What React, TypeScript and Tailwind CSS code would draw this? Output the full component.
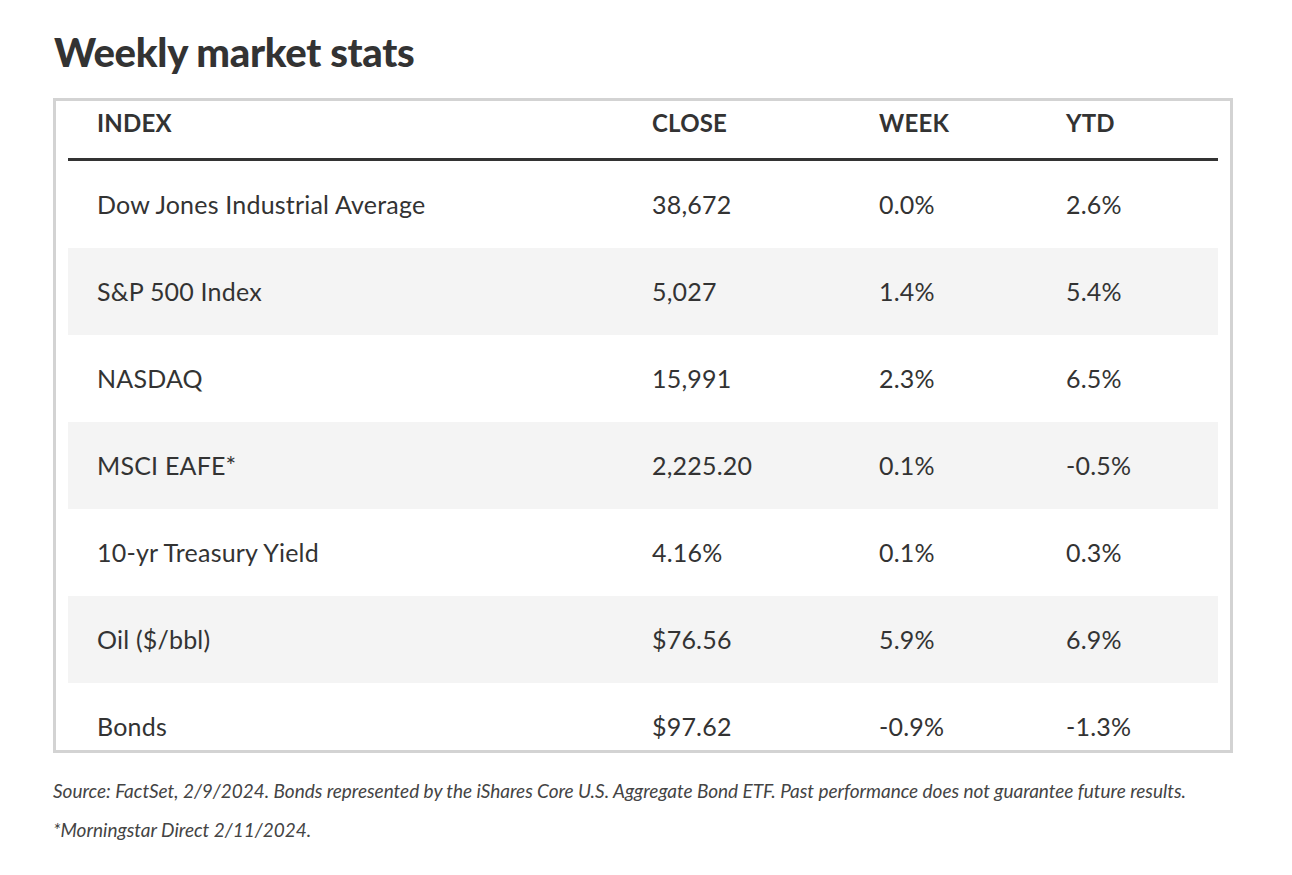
const rows = [
  { name: 'Dow Jones Industrial Average', close: '38,672', week: '0.0%', ytd: '2.6%' },
  { name: 'S&P 500 Index', close: '5,027', week: '1.4%', ytd: '5.4%' },
  { name: 'NASDAQ', close: '15,991', week: '2.3%', ytd: '6.5%' },
  { name: 'MSCI EAFE*', close: '2,225.20', week: '0.1%', ytd: '-0.5%' },
  { name: '10-yr Treasury Yield', close: '4.16%', week: '0.1%', ytd: '0.3%' },
  { name: 'Oil ($/bbl)', close: '$76.56', week: '5.9%', ytd: '6.9%' },
  { name: 'Bonds', close: '$97.62', week: '-0.9%', ytd: '-1.3%' },
];

export default function App() {
  return (
    <div className="min-h-[875px] w-[1292px] bg-white pl-[53px] pt-[28px] text-[#333] font-['Lato',sans-serif]">
      <h1 className="pl-[1px] text-[40px] font-black leading-[48px] tracking-[-0.3px] text-[#333]">Weekly market stats</h1>

      <div className="mt-[22px] w-[1180px] border-[3px] border-[#d3d3d3] px-[12px]">
        <div className="grid h-[60px] grid-cols-[555px_227px_187px_1fr] items-start border-b-[3px] border-[#333] pl-[29px] pt-[7px] text-[24px] font-bold leading-[29px] tracking-[0.2px]">
          <div>INDEX</div>
          <div>CLOSE</div>
          <div>WEEK</div>
          <div>YTD</div>
        </div>
        {rows.map((r, i) => (
          <div
            key={r.name}
            className={`grid grid-cols-[555px_227px_187px_1fr] items-start pl-[29px] pt-[29px] text-[25px] leading-[29px] tracking-[0.2px] ${
              i % 2 === 1 ? 'bg-[#f4f4f4]' : 'bg-white'
            } ${i === rows.length - 1 ? 'h-[67px]' : 'h-[87px]'}`}
          >
            <div>{r.name}</div>
            <div>{r.close}</div>
            <div>{r.week}</div>
            <div>{r.ytd}</div>
          </div>
        ))}
      </div>

      <p className="mt-[27px] text-[19px] italic leading-[22px] tracking-[-0.03px] text-[#444]">
        Source: FactSet, 2/9/2024. Bonds represented by the iShares Core U.S. Aggregate Bond ETF. Past performance does not guarantee future results.
      </p>
      <p className="mt-[17px] text-[19px] italic leading-[22px] text-[#444]">*Morningstar Direct 2/11/2024.</p>
    </div>
  );
}
